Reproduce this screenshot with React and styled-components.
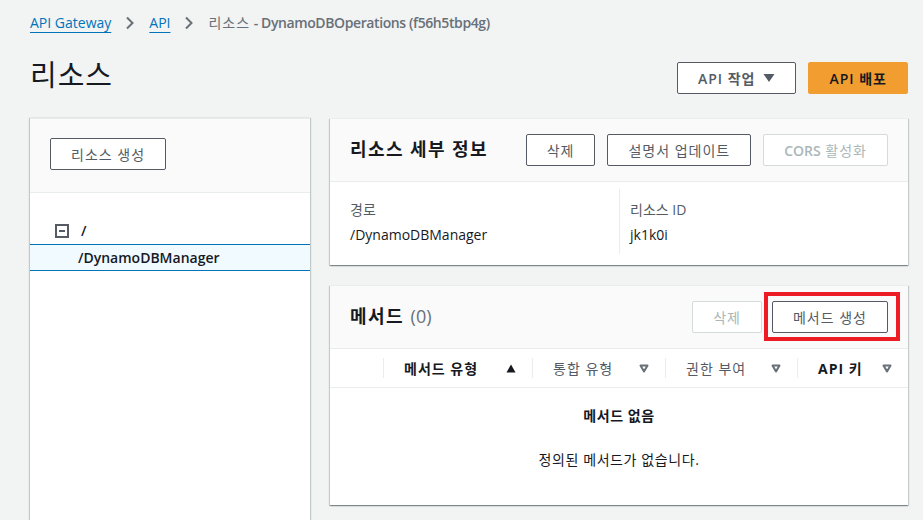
import styled, { createGlobalStyle } from "styled-components";

const GlobalStyle = createGlobalStyle`
  body {
    margin: 0;
    background-color: #f2f3f3;
    font-family: "Open Sans", "Noto Sans CJK KR", sans-serif;
    font-size: 14px;
    color: #16191f;
  }
`;

const Page = styled.div`
  height: 520px;
  overflow: hidden;
  padding: 12px 15px 0 30px;
  box-sizing: border-box;
`;

const Breadcrumbs = styled.nav`
  display: flex;
  align-items: center;
  gap: 14px;
  height: 22px;
  line-height: 22px;
`;

const Crumb = styled.a`
  color: #0073bb;
  text-decoration: underline;
  text-underline-offset: 4px;
`;

const Current = styled.span`
  color: #687078;
`;

const Hangul = styled.span`
  letter-spacing: ${(p) => p.$space || 1}px;
`;

const Strong = styled.b`
  font-weight: 600;
  letter-spacing: ${(p) => p.$tight || 0}px;
`;

const TitleRow = styled.div`
  display: flex;
  align-items: center;
  justify-content: space-between;
  margin-top: 28px;
  height: 32px;
`;

const Title = styled.h1`
  margin: 0;
  font-size: 29px;
  font-weight: 400;
  letter-spacing: 1px;
  line-height: 32px;
  margin-top: -6px;
`;

const Actions = styled.div`
  display: flex;
  gap: ${(p) => p.$gap || 12}px;
  align-items: center;
`;

const Button = styled.button`
  height: 32px;
  padding: 0 20px;
  box-sizing: border-box;
  border-radius: 2px;
  font-family: inherit;
  font-size: 14px;
  font-weight: ${(p) => (p.$bold ? 600 : 400)};
  letter-spacing: 1px;
  background: ${(p) => (p.$primary ? "#f29d30" : "#fff")};
  color: ${(p) => (p.$primary ? "#16191f" : p.disabled ? "#aab7b8" : "#545b64")};
  border: 1px solid
    ${(p) => (p.$primary ? "#f29d30" : p.disabled ? "#d5dbdb" : "#545b64")};
  display: inline-flex;
  align-items: center;
  gap: 8px;
  cursor: pointer;
  white-space: nowrap;
`;

const Main = styled.div`
  display: grid;
  grid-template-columns: 280px 1fr;
  gap: 20px;
  margin-top: 24px;
  align-items: start;
`;

const SidePanel = styled.aside`
  background: #fff;
  min-height: 420px;
  border-top: 1px solid #eaeded;
  box-shadow: 1px 0 1px 0 rgba(0, 28, 36, 0.2), -1px 0 1px 0 rgba(0, 28, 36, 0.2);
`;

const SideHead = styled.div`
  background: #fafafa;
  padding: 19px 20px 22px;
  border-bottom: 1px solid #eaeded;
`;

const Tree = styled.ul`
  list-style: none;
  margin: 0;
  padding: 24px 0 0;
`;

const TreeRow = styled.li`
  display: flex;
  align-items: center;
  gap: 12px;
  height: 27px;
  box-sizing: border-box;
  padding-left: ${(p) => p.$indent}px;
  font-weight: 600;
  background: ${(p) => (p.$selected ? "#f1faff" : "transparent")};
  border-top: 1px solid ${(p) => (p.$selected ? "#0073bb" : "transparent")};
  border-bottom: 1px solid ${(p) => (p.$selected ? "#0073bb" : "transparent")};
`;

const Column = styled.div`
  display: flex;
  flex-direction: column;
  gap: 20px;
`;

const Card = styled.section`
  background: #fff;
  border-top: 1px solid #eaeded;
  box-shadow: 0 1px 1px 0 rgba(0, 28, 36, 0.3),
    1px 1px 1px 0 rgba(0, 28, 36, 0.15), -1px 1px 1px 0 rgba(0, 28, 36, 0.15);
`;

const CardHead = styled.div`
  display: flex;
  align-items: center;
  justify-content: space-between;
  padding: 15px 20px;
  background: #fafafa;
  border-bottom: 1px solid #eaeded;
`;

const CardTitle = styled.h2`
  margin: 0;
  font-size: 18px;
  font-weight: 700;
  line-height: 22px;
  margin-top: -2px;
`;

const Count = styled.span`
  font-weight: 400;
  color: #687078;
  margin-left: 2px;
`;

const Details = styled.div`
  display: grid;
  grid-template-columns: 1fr 1fr;
  padding: 7px 20px 11px;
`;

const Field = styled.div`
  padding: 10px 0 8px ${(p) => (p.$divided ? 10 : 0)}px;
  border-left: ${(p) => (p.$divided ? "1px solid #eaeded" : "none")};
  line-height: 22px;
`;

const Label = styled.div`
  color: #545b64;
  margin-bottom: 3px;
`;

const Highlight = styled.div`
  position: relative;
  &::after {
    content: "";
    position: absolute;
    top: -9px;
    bottom: -8px;
    left: -8px;
    right: -12px;
    border: 4px solid #ed1c24;
    pointer-events: none;
  }
`;

const TableHead = styled.div`
  display: grid;
  grid-template-columns: 53px 149px 133px 132px 1fr;
  align-items: center;
  height: 38px;
  border-bottom: 1px solid #eaeded;
`;

const HeadCell = styled.div`
  display: flex;
  align-items: center;
  justify-content: space-between;
  height: 20px;
  padding: 0 16px 0 20px;
  border-left: 1px solid #eaeded;
  font-weight: ${(p) => (p.$bold ? 700 : 400)};
  color: ${(p) => (p.$bold ? "#16191f" : "#545b64")};
  letter-spacing: 1px;
`;

const Empty = styled.div`
  text-align: center;
  padding: 17px 0 34px;
  line-height: 22px;
  letter-spacing: 0.6px;
`;

const EmptyTitle = styled.div`
  font-weight: 700;
  margin-bottom: 22px;
`;

const Chevron = () => (
  <svg width="10" height="14" viewBox="0 0 10 14">
    <path d="M2 1.5 L7.5 7 L2 12.5" fill="none" stroke="#687078" strokeWidth="2" />
  </svg>
);

const Caret = () => (
  <svg width="12" height="10" viewBox="0 0 12 10">
    <path d="M0.5 1 H11.5 L6 9 Z" fill="#545b64" />
  </svg>
);

const Collapse = () => (
  <svg width="14" height="14" viewBox="0 0 14 14">
    <rect x="1" y="1" width="12" height="12" fill="none" stroke="#545b64" strokeWidth="2" />
    <path d="M4 7 H10" stroke="#545b64" strokeWidth="2" />
  </svg>
);

const SortIcon = ({ active }) =>
  active ? (
    <svg width="10" height="9" viewBox="0 0 10 9">
      <path d="M5 0.5 L9.5 8.5 H0.5 Z" fill="#16191f" />
    </svg>
  ) : (
    <svg width="10" height="9" viewBox="0 0 10 9">
      <path d="M1.5 1.5 H8.5 L5 7.5 Z" fill="none" stroke="#687078" strokeWidth="2" strokeLinejoin="round" />
    </svg>
  );

const columns = [
  { label: "메서드 유형", bold: true, active: true },
  { label: "통합 유형" },
  { label: "권한 부여" },
  { label: "API 키", bold: true },
];

export default function App() {
  return (
    <>
      <GlobalStyle />
      <Page>
        <Breadcrumbs>
          <Crumb>API Gateway</Crumb>
          <Chevron />
          <Crumb>API</Crumb>
          <Chevron />
          <Current>
            <Hangul>리소스</Hangul>{" "}
            <Strong $tight={-0.4}>- DynamoDBOperations (f56h5tbp4g)</Strong>
          </Current>
        </Breadcrumbs>

        <TitleRow>
          <Title>리소스</Title>
          <Actions>
            <Button $bold>
              API 작업 <Caret />
            </Button>
            <Button $primary $bold>
              API 배포
            </Button>
          </Actions>
        </TitleRow>

        <Main>
          <SidePanel>
            <SideHead>
              <Button>리소스 생성</Button>
            </SideHead>
            <Tree>
              <TreeRow $indent={25}>
                <Collapse />/
              </TreeRow>
              <TreeRow $indent={48} $selected>
                /DynamoDBManager
              </TreeRow>
            </Tree>
          </SidePanel>

          <Column>
            <Card>
              <CardHead>
                <CardTitle>
                  <Hangul $space={1.4}>리소스 세부 정보</Hangul>
                </CardTitle>
                <Actions>
                  <Button>삭제</Button>
                  <Button>설명서 업데이트</Button>
                  <Button disabled>
                    <span>
                      <Strong>CORS</Strong> 활성화
                    </span>
                  </Button>
                </Actions>
              </CardHead>
              <Details>
                <Field>
                  <Label>경로</Label>
                  <div>/DynamoDBManager</div>
                </Field>
                <Field $divided>
                  <Label>리소스 ID</Label>
                  <div>jk1k0i</div>
                </Field>
              </Details>
            </Card>

            <Card>
              <CardHead>
                <CardTitle>
                  <Hangul $space={1.4}>메서드</Hangul> <Count>(0)</Count>
                </CardTitle>
                <Actions $gap={10}>
                  <Button disabled>삭제</Button>
                  <Highlight>
                    <Button>메서드 생성</Button>
                  </Highlight>
                </Actions>
              </CardHead>
              <TableHead>
                <div />
                {columns.map((c) => (
                  <HeadCell key={c.label} $bold={c.bold}>
                    <span>{c.label}</span>
                    <SortIcon active={c.active} />
                  </HeadCell>
                ))}
              </TableHead>
              <Empty>
                <EmptyTitle>메서드 없음</EmptyTitle>
                <div>정의된 메서드가 없습니다.</div>
              </Empty>
            </Card>
          </Column>
        </Main>
      </Page>
    </>
  );
}
